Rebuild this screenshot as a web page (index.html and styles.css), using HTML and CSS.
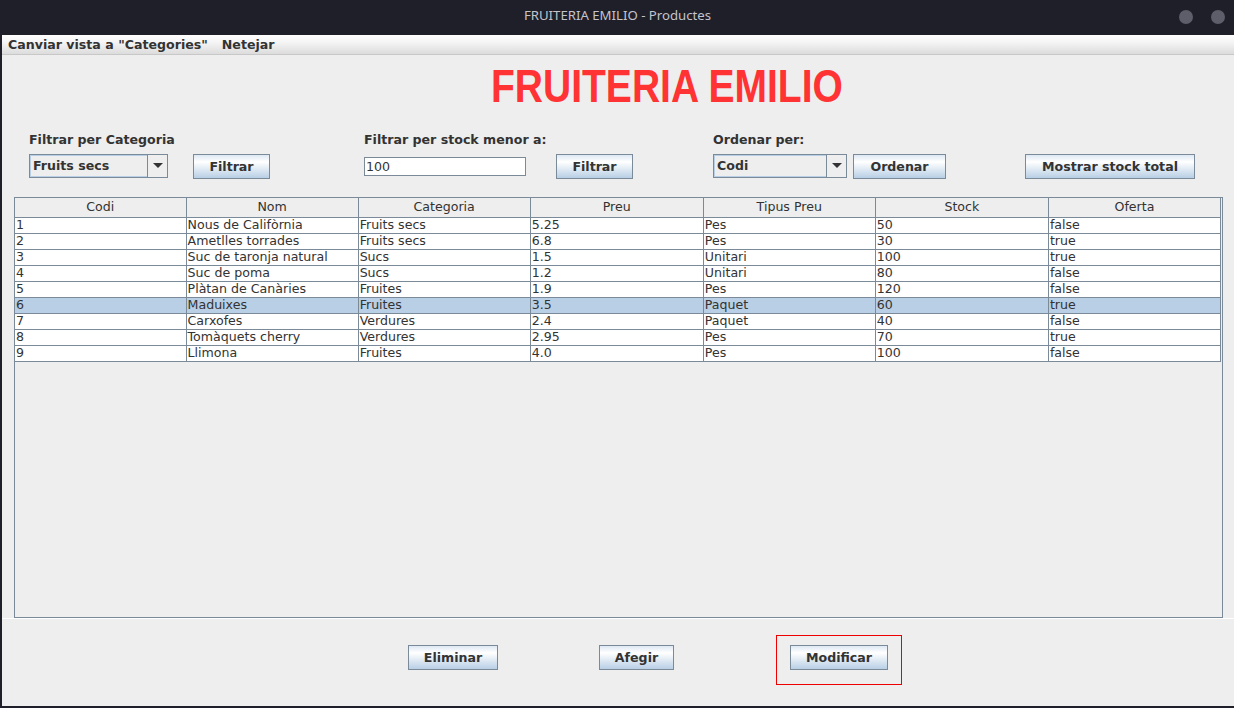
FILE: index.html
```html
<!DOCTYPE html>
<html>
<head>
<meta charset="utf-8">
<title>FRUITERIA EMILIO - Productes</title>
<link rel="stylesheet" href="styles.css">
</head>
<body>
<div class="window">
  <div class="titlebar">
    <span class="title">FRUITERIA EMILIO - Productes</span>
    <div class="wm-buttons"><span class="dot"></span><span class="dot"></span></div>
  </div>
  <div class="frame">
    <div class="menubar">
      <span class="menu">Canviar vista a "Categories"</span>
      <span class="menu">Netejar</span>
    </div>
    <div class="content">
      <div class="heading-row"><span class="heading">FRUITERIA EMILIO</span></div>
      <div class="controls">
        <div class="group g1">
          <div class="label">Filtrar per Categoria</div>
          <div class="row">
            <div class="combo c1"><span class="combo-text">Fruits secs</span><span class="arrow"><span class="tri"></span></span></div>
            <button class="btn b-filtrar1">Filtrar</button>
          </div>
        </div>
        <div class="group g2">
          <div class="label">Filtrar per stock menor a:</div>
          <div class="row">
            <div class="field">100</div>
            <button class="btn b-filtrar2">Filtrar</button>
          </div>
        </div>
        <div class="group g3">
          <div class="label">Ordenar per:</div>
          <div class="row">
            <div class="combo c2"><span class="combo-text">Codi</span><span class="arrow"><span class="tri"></span></span></div>
            <button class="btn b-ordenar">Ordenar</button>
            <button class="btn b-mostrar">Mostrar stock total</button>
          </div>
        </div>
      </div>
      <div class="scroll">
        <table class="grid">
          <colgroup>
            <col class="c-a"><col class="c-b"><col class="c-b"><col class="c-c"><col class="c-b"><col class="c-c"><col class="c-b">
          </colgroup>
          <thead>
            <tr><th>Codi</th><th>Nom</th><th>Categoria</th><th>Preu</th><th>Tipus Preu</th><th>Stock</th><th>Oferta</th></tr>
          </thead>
          <tbody>
            <tr><td>1</td><td>Nous de Califòrnia</td><td>Fruits secs</td><td>5.25</td><td>Pes</td><td>50</td><td>false</td></tr>
            <tr><td>2</td><td>Ametlles torrades</td><td>Fruits secs</td><td>6.8</td><td>Pes</td><td>30</td><td>true</td></tr>
            <tr><td>3</td><td>Suc de taronja natural</td><td>Sucs</td><td>1.5</td><td>Unitari</td><td>100</td><td>true</td></tr>
            <tr><td>4</td><td>Suc de poma</td><td>Sucs</td><td>1.2</td><td>Unitari</td><td>80</td><td>false</td></tr>
            <tr><td>5</td><td>Plàtan de Canàries</td><td>Fruites</td><td>1.9</td><td>Pes</td><td>120</td><td>false</td></tr>
            <tr class="sel"><td>6</td><td>Maduixes</td><td>Fruites</td><td>3.5</td><td>Paquet</td><td>60</td><td>true</td></tr>
            <tr><td>7</td><td>Carxofes</td><td>Verdures</td><td>2.4</td><td>Paquet</td><td>40</td><td>false</td></tr>
            <tr><td>8</td><td>Tomàquets cherry</td><td>Verdures</td><td>2.95</td><td>Pes</td><td>70</td><td>true</td></tr>
            <tr><td>9</td><td>Llimona</td><td>Fruites</td><td>4.0</td><td>Pes</td><td>100</td><td>false</td></tr>
          </tbody>
        </table>
      </div>
      <div class="bottom">
        <button class="btn b-eliminar">Eliminar</button>
        <button class="btn b-afegir">Afegir</button>
        <div class="redbox"><button class="btn b-modificar">Modificar</button></div>
      </div>
    </div>
  </div>
</div>
</body>
</html>
```

FILE: styles.css
```css
* { box-sizing: border-box; }
html, body { margin: 0; padding: 0; }
body {
  width: 1234px;
  height: 708px;
  overflow: hidden;
  background: #1f1f29;
  font-family: "DejaVu Sans", sans-serif;
  color: #333333;
}
.window {
  display: flex;
  flex-direction: column;
  width: 1234px;
  height: 708px;
}
.titlebar {
  height: 35px;
  flex: none;
  display: flex;
  align-items: flex-start;
  justify-content: center;
  position: relative;
  background: #1f1f29;
  padding-top: 5px;
}
.title {
  font-family: "Noto Sans", "DejaVu Sans", sans-serif;
  font-size: 13.2px;
  line-height: 20px;
  color: #c4c4cc;
  padding-left: 1px;
}
.wm-buttons {
  position: absolute;
  right: 9px;
  top: 10px;
  display: flex;
  gap: 18px;
}
.dot {
  width: 14px;
  height: 14px;
  border-radius: 50%;
  background: #5e5e6a;
}
.frame {
  flex: 1;
  margin: 0 0 2px 2px;
  background: #eeeeee;
  display: flex;
  flex-direction: column;
}
.menubar {
  height: 20px;
  flex: none;
  background: linear-gradient(#ffffff, #f4f4f4 40%, #dcdcdc);
  border-bottom: 1px solid #c8c8c8;
  display: flex;
  align-items: center;
  padding-left: 6px;
  gap: 14px;
}
.menu {
  font-size: 12.6px;
  font-weight: bold;
  color: #333333;
}
.content {
  flex: 1;
  display: flex;
  flex-direction: column;
}
.heading-row {
  height: 58px;
  flex: none;
  display: flex;
  justify-content: center;
  align-items: flex-start;
  padding-left: 98px;
  padding-top: 4px;
}
.heading {
  display: inline-block;
  font-family: "Liberation Sans", Arial, sans-serif;
  font-weight: bold;
  font-size: 47px;
  line-height: 54px;
  color: #ff3333;
  transform: scaleX(0.83);
  white-space: nowrap;
}
.controls {
  display: flex;
  flex: none;
  height: 85px;
  padding-left: 27px;
  padding-top: 20px;
}
.group { display: flex; flex-direction: column; }
.g1 { width: 335px; }
.g2 { width: 349px; }
.label {
  font-size: 12.6px;
  font-weight: bold;
  color: #333333;
  height: 21px;
  line-height: 14px;
}
.row { display: flex; align-items: center; height: 24px; }
.combo {
  height: 24px;
  border: 1px solid #7a8a99;
  background: #eeeeee;
  display: flex;
  font-size: 12.6px;
  font-weight: bold;
  color: #333333;
  margin-top: -1px;
}
.combo-text {
  flex: 1;
  padding-left: 2px;
  line-height: 20px;
  border: 1px solid #b8cfe5;
  border-right: none;
  background: #eeeeee;
}
.c1 { width: 139px; }
.c2 { width: 134px; }
.arrow {
  width: 20px;
  border-left: 1px solid #7a8a99;
  display: flex;
  align-items: center;
  justify-content: center;
  background: #eeeeee;
}
.tri {
  width: 0; height: 0;
  border-left: 5px solid transparent;
  border-right: 5px solid transparent;
  border-top: 5px solid #333333;
}
.btn {
  height: 25px;
  border: 1px solid #7a8a99;
  background: linear-gradient(#dde8f3, #ffffff 30%, #b8cfe5);
  font-family: "DejaVu Sans", sans-serif;
  font-size: 12.6px;
  font-weight: bold;
  color: #333333;
  padding: 0;
  margin: 0;
}
.b-filtrar1 { width: 77px; margin-left: 25px; }
.field {
  width: 162px;
  height: 19px;
  background: #ffffff;
  border: 1px solid #7a8a99;
  font-size: 12.6px;
  line-height: 17px;
  padding-left: 1px;
  color: #333333;
}
.b-filtrar2 { width: 77px; margin-left: 30px; }
.b-ordenar { width: 93px; margin-left: 6px; }
.b-mostrar { width: 170px; margin-left: 79px; }
.scroll {
  margin-left: 12px;
  width: 1209px;
  height: 421px;
  border: 1px solid #7a8a99;
  background: #eeeeee;
  flex: none;
  margin-top: -1px;
}
.grid {
  border-collapse: collapse;
  table-layout: fixed;
  width: 1206px;
  font-size: 12.6px;
}
.c-a { width: 171px; }
.c-b { width: 172px; }
.c-c { width: 173px; }
.grid th {
  height: 19px;
  font-weight: normal;
  background: #eeeeee;
  border-right: 1px solid #7a8a99;
  border-bottom: 1px solid #7a8a99;
  padding: 0;
  line-height: 18px;
  text-align: center;
  color: #333333;
}
.grid td {
  height: 16px;
  background: #ffffff;
  border-right: 1px solid #7a8a99;
  border-bottom: 1px solid #7a8a99;
  padding: 0 0 0 1px;
  line-height: 14px;
  white-space: nowrap;
  overflow: hidden;
  color: #333333;
}
.grid tr.sel td { background: #b8cfe5; }
.bottom {
  flex: 1;
  border-top: 1px solid #ffffff;
  display: flex;
  align-items: flex-start;
  padding-top: 26px;
}
.b-eliminar { width: 90px; margin-left: 406px; }
.b-afegir { width: 75px; margin-left: 101px; }
.redbox {
  margin-left: 102px;
  margin-top: -10px;
  width: 126px;
  height: 50px;
  border: 1px solid #ee0000;
  padding: 9px 0 0 13px;
}
.b-modificar { width: 98px; }
```
